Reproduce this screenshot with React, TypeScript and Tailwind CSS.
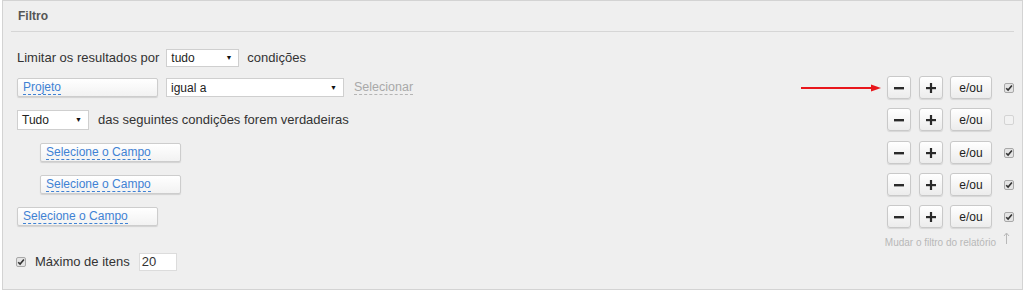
import React from "react";

function Check({ checked = true }: { checked?: boolean }) {
  return (
    <span
      className={`flex h-[10px] w-[10px] items-center justify-center rounded-[2px] border ${
        checked ? "border-[#a8a8a8] bg-[#e4e4e4]" : "border-[#d4d4d4] bg-[#f2f2f2]"
      }`}
    >
      {checked && (
        <svg width="8" height="8" viewBox="0 0 8 8">
          <path d="M1.2 4.2 L3.1 6.1 L6.9 1.6" fill="none" stroke="#333" strokeWidth="1.6" />
        </svg>
      )}
    </span>
  );
}

function Select({ value, width, height }: { value: string; width: string; height: string }) {
  return (
    <div
      className={`flex items-center justify-between border border-[#cfcfcf] bg-white pl-[4px] pr-[6px] text-[12px] text-[#222] ${width} ${height}`}
    >
      <span>{value}</span>
      <span className="text-[7px] leading-none text-[#111]">▼</span>
    </div>
  );
}

function FieldButton({ label, indent = false }: { label: string; indent?: boolean }) {
  return (
    <div
      className={`flex h-[19px] w-[141px] items-center rounded-[2px] border border-[#cdcdcd] bg-gradient-to-b from-white to-[#f2f2f2] px-[5px] shadow-[0_1px_1px_rgba(0,0,0,0.12)] ${
        indent ? "ml-[23px]" : ""
      }`}
    >
      <span className="border-b border-dashed border-[#3f82d4] text-[12px] leading-[13px] text-[#3f82d4]">
        {label}
      </span>
    </div>
  );
}

function ActionButton({ children, width }: { children: React.ReactNode; width: string }) {
  return (
    <div
      className={`flex h-[23px] items-center justify-center rounded-[3px] border border-[#c9c9c9] bg-gradient-to-b from-white to-[#ececec] text-[12px] text-[#222] shadow-[0_1px_1px_rgba(0,0,0,0.1)] ${width}`}
    >
      {children}
    </div>
  );
}

function Actions({ checked = true, arrow = false }: { checked?: boolean; arrow?: boolean }) {
  return (
    <div className="flex items-center">
      {arrow && (
        <svg width="80" height="10" viewBox="0 0 80 10" className="mr-[6px]">
          <line x1="0" y1="5" x2="72" y2="5" stroke="#e8161b" strokeWidth="2" />
          <path d="M70 1.5 L80 5 L70 8.5 Z" fill="#e8161b" />
        </svg>
      )}
      <ActionButton width="w-[24px]">
        <svg width="10" height="10" viewBox="0 0 10 10">
          <rect x="0" y="4" width="10" height="2.4" fill="#2a2a2a" />
        </svg>
      </ActionButton>
      <div className="w-[8px]" />
      <ActionButton width="w-[24px]">
        <svg width="10" height="10" viewBox="0 0 10 10">
          <rect x="0" y="4" width="10" height="2.2" fill="#2a2a2a" />
          <rect x="3.9" y="0" width="2.2" height="10" fill="#2a2a2a" />
        </svg>
      </ActionButton>
      <div className="w-[7px]" />
      <ActionButton width="w-[42px]">e/ou</ActionButton>
      <div className="w-[12px]" />
      <Check checked={checked} />
    </div>
  );
}

export default function App() {
  return (
    <div className="h-[292px] w-[1024px] bg-white font-['Liberation_Sans',Arial,sans-serif] text-[#333]">
      <div className="ml-[2px] h-[290px] w-[1021px] border border-[#d3d3d3] bg-[#efefef]">
        <div className="mx-[8px] flex h-[31px] items-center border-b border-[#d6d6d6] pl-[7px]">
          <span className="text-[12px] font-bold text-[#555]">Filtro</span>
        </div>

        <div className="pl-[14px] pr-[8px] pt-[14px]">
          <div className="flex h-[23px] items-center text-[13px]">
            <span>Limitar os resultados por</span>
            <div className="w-[7px]" />
            <Select value="tudo" width="w-[73px]" height="h-[18px]" />
            <span className="ml-[8px]">condições</span>
          </div>

          <div className="mt-[7px] flex h-[23px] items-center justify-between">
            <div className="flex items-center">
              <FieldButton label="Projeto" />
              <div className="w-[8px]" />
              <Select value="igual a" width="w-[178px]" height="h-[19px]" />
              <span className="ml-[10px] border-b border-dashed border-[#b5b5b5] text-[12.5px] leading-[13px] text-[#a9a9a9]">
                Selecionar
              </span>
            </div>
            <Actions arrow />
          </div>

          <div className="mt-[9px] flex h-[23px] items-center justify-between">
            <div className="flex items-center text-[13px]">
              <Select value="Tudo" width="w-[72px]" height="h-[20px]" />
              <span className="ml-[9px]">das seguintes condições forem verdadeiras</span>
            </div>
            <Actions checked={false} />
          </div>

          <div className="mt-[10px] flex h-[23px] items-center justify-between">
            <FieldButton label="Selecione o Campo" indent />
            <Actions />
          </div>

          <div className="mt-[9px] flex h-[23px] items-center justify-between">
            <FieldButton label="Selecione o Campo" indent />
            <Actions />
          </div>

          <div className="mt-[9px] flex h-[23px] items-center justify-between">
            <FieldButton label="Selecione o Campo" />
            <Actions />
          </div>

          <div className="mt-[7px] flex h-[14px] items-center justify-end">
            <span className="text-[10px] text-[#b8b8b8]">Mudar o filtro do relatório</span>
            <svg width="7" height="12" viewBox="0 0 7 12" className="ml-[7px] mr-[4px] -mt-[8px]">
              <line x1="3.5" y1="1.5" x2="3.5" y2="12" stroke="#b8b8b8" strokeWidth="1" />
              <path d="M1 4 L3.5 1 L6 4" fill="none" stroke="#b8b8b8" strokeWidth="1" />
            </svg>
          </div>

          <div className="mt-[3px] flex h-[20px] items-center text-[13px]">
            <span className="-ml-[1px]">
              <Check />
            </span>
            <span className="ml-[9px]">Máximo de itens</span>
            <div className="ml-[9px] flex h-[18px] w-[38px] items-center border border-[#dcdcdc] bg-white pl-[2px]">
              20
            </div>
          </div>
        </div>
      </div>
    </div>
  );
}
